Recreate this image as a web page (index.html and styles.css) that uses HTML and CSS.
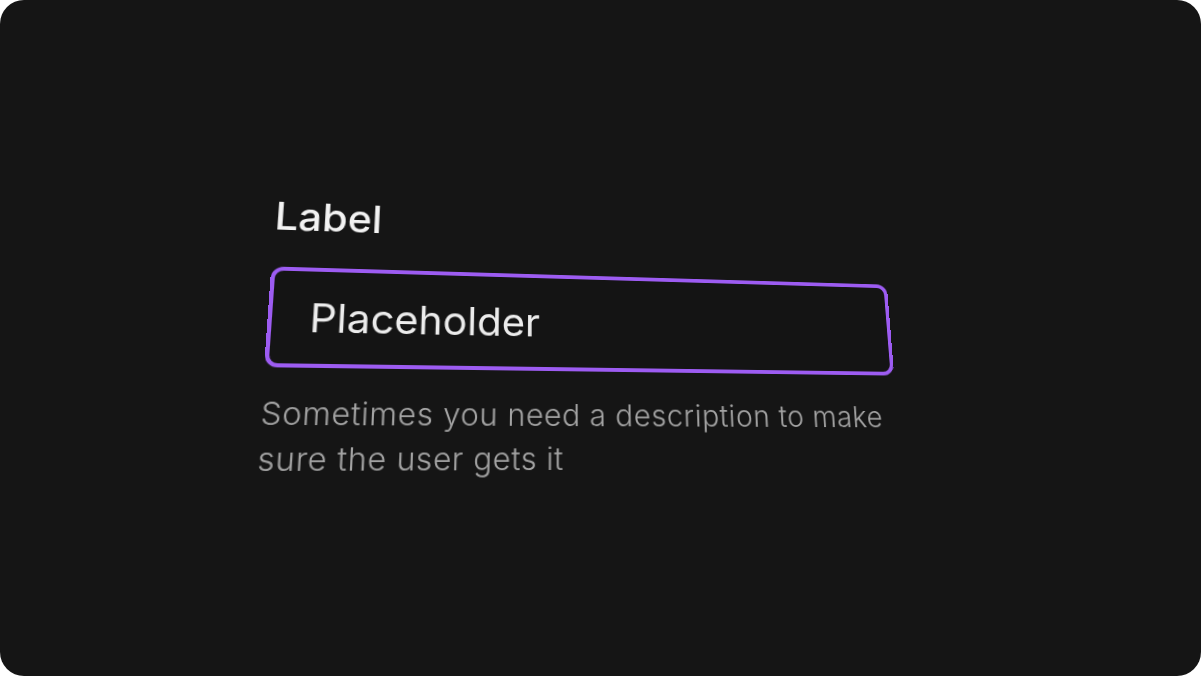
FILE: index.html
```html
<!DOCTYPE html>
<html lang="en">
<head>
  <meta charset="UTF-8">
  <meta name="viewport" content="width=device-width, initial-scale=1.0">
  <title>Text Field</title>
  <link rel="stylesheet" href="styles.css">
</head>
<body>
  <main class="frame">
    <div class="field">
      <label class="field-label" for="name">Label</label>
      <input class="field-input" type="text" id="name" placeholder="Placeholder">
      <p class="field-hint">Sometimes you need a description to make sure the user gets it</p>
    </div>
  </main>
</body>
</html>
```

FILE: styles.css
```css
* {
  box-sizing: border-box;
}
body {
  margin: 0;
  padding: 0;
  background-color: #fff;
  font-family: Inter, "Noto Sans", sans-serif;
}
.frame {
  width: 100%;
  height: 100vh;
  background-color: #151515;
  border-radius: 24px;
  display: flex;
  justify-content: center;
  align-items: center;
  overflow: hidden;
}
/* the whole field sits on a tilted plane */
.field {
  width: 640px;
  transform-origin: 0 0;
  transform: matrix3d(1.047465, 0.043197, 0, 0.000170536, -0.066623, 0.948448, 0, -0.000240301, 0, 0, 1, 0, -4.45954, -2.96760, 0, 1);
}
.field-label {
  display: block;
  margin-bottom: 28px;
  font-size: 40px;
  font-weight: 500;
  line-height: 48px;
  color: #f2f2f2;
}
.field-input {
  display: block;
  width: 100%;
  height: 100px;
  margin: 0;
  padding: 0 35px;
  border: 4px solid #9d5cf2;
  border-radius: 12px;
  background-color: #141414;
  font-family: inherit;
  font-size: 40px;
  color: #ededed;
  outline: none;
}
.field-input::placeholder {
  color: #ececec;
  opacity: 1;
}
.field-hint {
  margin: 23px 0 0;
  font-size: 30px;
  font-weight: 300;
  line-height: 43px;
  letter-spacing: 0.55px;
  color: #a3a3a3;
}
```
